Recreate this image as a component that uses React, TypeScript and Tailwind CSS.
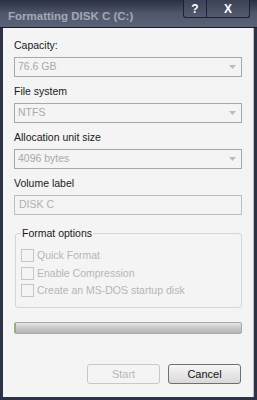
import React from "react";

const combos = [
  { label: "Capacity:", value: "76.6 GB" },
  { label: "File system", value: "NTFS" },
  { label: "Allocation unit size", value: "4096 bytes" },
];

const options = ["Quick Format", "Enable Compression", "Create an MS-DOS startup disk"];

const Arrow = () => (
  <svg width="7" height="4" viewBox="0 0 7 4" className="mr-[5px]">
    <path d="M0 0 H7 L3.5 4 Z" fill="#bcbcbc" />
  </svg>
);

const App: React.FC = () => {
  return (
    <div className="flex h-[400px] w-[257px] flex-col bg-[#2c3346] font-['Liberation_Sans',Arial,sans-serif]">
      {/* title bar */}
      <div className="flex h-[28px] items-start border-b border-[#181c28] bg-gradient-to-b from-[#2a3043] via-[#50576b] to-[#5b6176] pl-[8px]">
        <span className="mt-[9px] text-[11.5px] leading-[14px] font-bold text-[#a3a8b6]">
          Formatting DISK C (C:)
        </span>
        <div className="mr-[7px] ml-auto flex h-[18px]">
          <div className="flex w-[24px] items-center justify-center rounded-bl-[3px] border border-t-0 border-[#1c2133] bg-gradient-to-b from-[#3b4256] to-[#535b70] text-[12px] font-bold text-white">
            ?
          </div>
          <div className="flex w-[43px] items-center justify-center rounded-br-[3px] border border-t-0 border-l-0 border-[#1c2133] bg-gradient-to-b from-[#3b4256] to-[#535b70] text-[12px] font-bold text-white">
            X
          </div>
        </div>
      </div>

      {/* client area */}
      <div className="mb-[3px] ml-[3px] mr-[3px] flex flex-1 flex-col border-r border-[#b7bcc6] bg-[#f4f4f4] px-[11px] pt-[11px] text-[10.5px]">
        {combos.map((c, i) => (
          <div key={c.label} className={i > 0 ? "mt-[8px]" : ""}>
            <div className="mb-[5px] h-[13px] leading-[13px] text-[#1a1a1a]">{c.label}</div>
            <div className="flex h-[20px] items-center justify-between border border-[#a9a9a9] bg-[#f4f4f4] pl-[3px] text-[#a9a9a9]">
              <span>{c.value}</span>
              <Arrow />
            </div>
          </div>
        ))}

        <div className="mt-[8px]">
          <div className="mb-[5px] h-[13px] leading-[13px] text-[#1a1a1a]">Volume label</div>
          <div className="flex h-[20px] items-center border border-[#bdbdbd] bg-[#f4f4f4] pl-[4px] text-[#b0b0b0]">
            DISK C
          </div>
        </div>

        <fieldset className="mt-[12px] ml-[1px] rounded-[3px] border border-[#d6d6d6] pb-[10px] pl-[5px]">
          <legend className="h-[13px] px-[1px] leading-[13px] text-[#1a1a1a]">Format options</legend>
          <div className="flex flex-col gap-[4.5px] pt-[9px]">
            {options.map((o) => (
              <div key={o} className="flex h-[13px] items-center gap-[3px]">
                <span className="h-[13px] w-[13px] border border-[#c6c6c6] bg-[#f4f4f4]" />
                <span className="leading-[13px] text-[#b6b6b6]">{o}</span>
              </div>
            ))}
          </div>
        </fieldset>

        <div className="mt-[14px] flex h-[12px] overflow-hidden rounded-[2px] border border-[#a8a8a8] bg-gradient-to-b from-[#e6e6e6] via-[#c9c9c9] to-[#b6b6b6]">
          <span className="w-[1px] bg-[#6cc46c]" />
        </div>

        <div className="mt-[30px] mr-[1px] flex justify-end gap-[8px]">
          <button className="h-[20px] w-[73px] rounded-[3px] border border-[#c8c8c8] bg-[#f4f4f4] text-[11px] text-[#b8b8b8]">
            Start
          </button>
          <button className="h-[20px] w-[73px] rounded-[3px] border border-[#707070] bg-gradient-to-b from-[#f6f6f6] to-[#d9d9d9] text-[11px] text-[#111]">
            Cancel
          </button>
        </div>
      </div>
    </div>
  );
};

export default App;
